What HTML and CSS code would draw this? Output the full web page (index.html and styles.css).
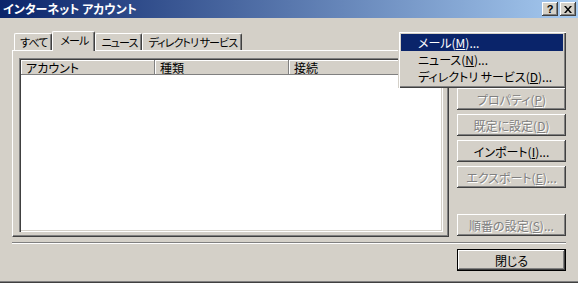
FILE: index.html
```html
<!DOCTYPE html>
<html lang="ja">
<head>
<meta charset="utf-8">
<title>インターネット アカウント</title>
<link rel="stylesheet" href="styles.css">
</head>
<body>
<div class="window">
  <div class="titlebar">
    <span class="title">インターネット アカウント</span>
    <span class="capbtn help">?</span>
    <span class="capbtn close"><svg width="8" height="7" viewBox="0 0 8 7"><path d="M0 0h2l2 2.4L6 0h2L5 3.5 8 7H6L4 4.6 2 7H0l3-3.5z" fill="#000"/></svg></span>
  </div>
  <div class="content">
    <div class="main">
      <div class="left">
        <div class="tabs">
          <div class="tab">すべて</div>
          <div class="tab active">メール</div>
          <div class="tab">ニュース</div>
          <div class="tab">ディレクトリ サービス</div>
        </div>
        <div class="panel">
          <div class="list">
            <div class="lheader">
              <div class="col col-a">アカウント</div>
              <div class="col col-b">種類</div>
              <div class="col col-c">接続</div>
            </div>
          </div>
        </div>
      </div>
      <div class="right">
        <div class="btn covered">追加(<u>A</u>) ▶</div>
        <div class="btn covered">削除(<u>R</u>)</div>
        <div class="btn disabled">プロパティ(<u>P</u>)</div>
        <div class="btn disabled">既定に設定(<u>D</u>)</div>
        <div class="btn">インポート(<u>I</u>)...</div>
        <div class="btn disabled">エクスポート(<u>E</u>)...</div>
        <div class="spacer"></div>
        <div class="btn disabled">順番の設定(<u>S</u>)...</div>
      </div>
    </div>
    <div class="sep"></div>
    <div class="footer">
      <div class="btn default">閉じる</div>
    </div>
  </div>
  <div class="menu">
    <div class="mitem selected">メール(<u>M</u>)...</div>
    <div class="mitem">ニュース(<u>N</u>)...</div>
    <div class="mitem">ディレクトリ サービス(<u>D</u>)...</div>
  </div>
</div>
</body>
</html>
```

FILE: styles.css
```css
* { box-sizing: border-box; margin: 0; padding: 0; }
html, body { width: 578px; height: 283px; overflow: hidden; }
body {
  background: #d4d0c8;
  font-family: "Noto Sans CJK JP", "Noto Sans", sans-serif;
  font-size: 12px;
  line-height: 1;
  color: #000;
  font-feature-settings: "palt";
}
u { text-decoration: underline; text-underline-offset: 1px; text-decoration-thickness: 1px; }

.window {
  position: relative;
  height: 283px;
  box-shadow: inset 0 -1px 0 #404040, inset 0 -2px 0 #808080;
}

.titlebar {
  height: 18px;
  display: flex;
  align-items: center;
  padding: 0 2px 0 3px;
  background: linear-gradient(to right, #0a246a, #a6caf0);
}
.title {
  flex: 1;
  color: #fff;
  font-weight: bold;
  font-size: 12px;
  white-space: nowrap;
}
.capbtn {
  width: 16px;
  height: 14px;
  margin-left: 3px;
  display: flex;
  align-items: center;
  justify-content: center;
  background: #d4d0c8;
  box-shadow: inset -1px -1px 0 #404040, inset 1px 1px 0 #fff, inset -2px -2px 0 #808080;
}
.capbtn.help {
  font-family: "Liberation Sans", sans-serif;
  font-weight: bold;
  font-size: 11px;
  padding-top: 1px;
}
.capbtn.close { margin-left: 2px; }

.content { padding: 0 12px; }

.main {
  display: flex;
  gap: 8px;
  margin-top: 13px;
}
.left { width: 437px; }

.tabs {
  display: flex;
  align-items: flex-end;
  height: 19px;
  padding-left: 2px;
  position: relative;
  z-index: 1;
}
.tab {
  height: 17px;
  display: flex;
  align-items: center;
  justify-content: center;
  white-space: nowrap;
  padding: 1px 4px 0 5px;
  font-size: 11px;
  letter-spacing: -0.9px;
  background: #d4d0c8;
  border-left: 1px solid #fff;
  border-top: 1px solid #fff;
  border-right: 1px solid #404040;
  border-radius: 2px 2px 0 0;
  box-shadow: inset -1px 0 0 #808080;
}
.tab.active {
  height: 20px;
  margin-bottom: -1px;
  padding: 0 6px 2px 7px;
}

.panel {
  height: 187px;
  display: flex;
  padding: 7px 5px 4px 6px;
  border-left: 1px solid #fff;
  border-top: 1px solid #fff;
  border-right: 1px solid #404040;
  border-bottom: 1px solid #404040;
  box-shadow: inset -1px -1px 0 #808080;
}
.list {
  flex: 1;
  background: #fff;
  padding: 2px;
  box-shadow: inset 1px 1px 0 #808080, inset 2px 2px 0 #404040, inset -1px -1px 0 #fff, inset -2px -2px 0 #d4d0c8;
}
.lheader {
  display: flex;
  height: 15px;
}
.col {
  background: #d4d0c8;
  display: flex;
  align-items: center;
  padding: 1px 0 0 5px;
  box-shadow: inset -1px -1px 0 #808080, inset 1px 1px 0 #fff;
  white-space: nowrap;
}
.col-a { width: 134px; }
.col-b { width: 134px; }
.col-c { flex: 1; }

.right {
  width: 109px;
  height: 205px;
  display: flex;
  flex-direction: column;
  gap: 4px;
  padding-top: 5px;
}
.spacer { flex: 1; }

.btn {
  height: 22px;
  display: flex;
  align-items: center;
  justify-content: center;
  white-space: nowrap;
  background: #d4d0c8;
  box-shadow: inset -1px -1px 0 #404040, inset 1px 1px 0 #fff, inset -2px -2px 0 #808080;
  padding-top: 1px;
}
.btn.covered { visibility: hidden; }
.btn.disabled {
  color: #808080;
  text-shadow: 1px 1px 0 #fff;
}
.btn.default {
  width: 109px;
  border: 1px solid #000;
}

.sep {
  height: 2px;
  margin-top: 5px;
  border-top: 1px solid #808080;
  border-bottom: 1px solid #fff;
}
.footer {
  display: flex;
  justify-content: flex-end;
  margin-top: 5px;
}

.menu {
  position: absolute;
  left: 398px;
  top: 31px;
  width: 168px;
  padding: 3px;
  background: #d4d0c8;
  z-index: 10;
  box-shadow: inset 1px 1px 0 #d4d0c8, inset 2px 2px 0 #fff, inset -1px -1px 0 #404040, inset -2px -2px 0 #808080;
}
.mitem {
  height: 17px;
  display: flex;
  align-items: center;
  padding: 1px 0 0 17px;
  white-space: nowrap;
}
.mitem.selected {
  background: #0a246a;
  color: #fff;
}
```
